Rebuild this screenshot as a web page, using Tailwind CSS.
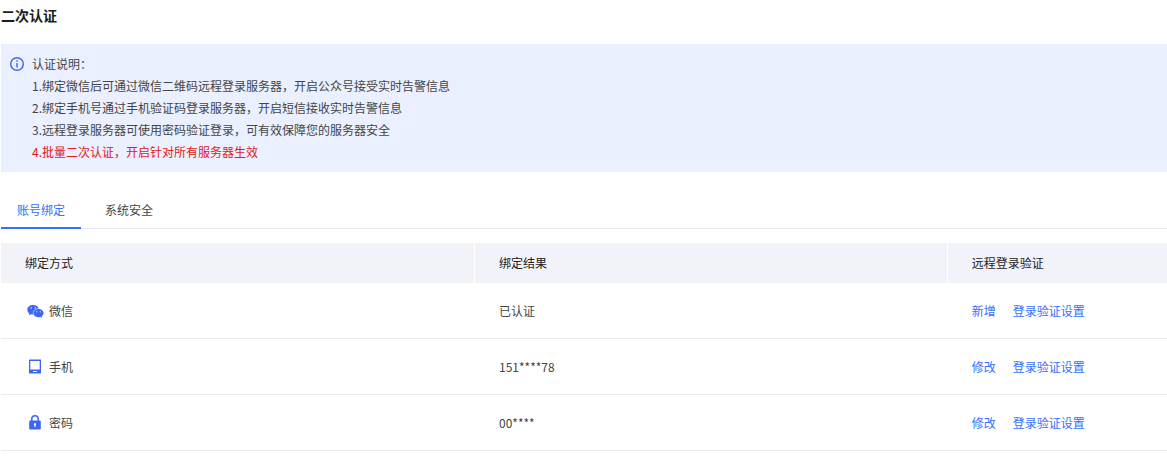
<!DOCTYPE html>
<html lang="zh-CN">
<head>
    <meta charset="UTF-8">
    <meta name="viewport" content="width=device-width, initial-scale=1.0">
    <title>二次认证</title>
    <script src="https://cdn.jsdelivr.net/npm/@tailwindcss/browser@4"></script>
</head>
<body class="bg-white pl-px font-['Noto_Sans_CJK_SC',sans-serif] text-xs text-[#444444]">
    <!-- Title -->
    <header class="pt-[3px] pb-[17px]">
        <h1 class="text-sm leading-6 font-bold text-[#1c1c1c]">二次认证</h1>
    </header>

    <main>
        <!-- Notice -->
        <section class="flex gap-[7px] bg-[#eaf0ff] px-2 py-[9px]">
            <svg class="mt-[3px] h-4 w-4 flex-none text-[#4569f5]" fill="none" stroke="currentColor" viewBox="0 0 16 16">
                <circle cx="8" cy="8" r="6.3" stroke-width="1.5"></circle>
                <path stroke-width="1.5" d="M8 7v4.5M8 4.3v1.5"></path>
            </svg>
            <div class="leading-[22px]">
                <p>认证说明：</p>
                <p>1.绑定微信后可通过微信二维码远程登录服务器，开启公众号接受实时告警信息</p>
                <p>2.绑定手机号通过手机验证码登录服务器，开启短信接收实时告警信息</p>
                <p>3.远程登录服务器可使用密码验证登录，可有效保障您的服务器安全</p>
                <p class="text-[#e02020]">4.批量二次认证，开启针对所有服务器生效</p>
            </div>
        </section>

        <!-- Tabs -->
        <nav class="mt-5 flex gap-2 border-b border-[#e6e9ee]" role="tablist">
            <button type="button" role="tab" aria-selected="true" class="-mb-px h-[37px] border-b-2 border-[#3370ff] px-4 text-[#3370ff]">账号绑定</button>
            <button type="button" role="tab" aria-selected="false" class="-mb-px h-[37px] border-b-2 border-transparent px-4">系统安全</button>
        </nav>

        <!-- Binding table -->
        <table class="mt-[14px] w-full table-fixed border-separate border-spacing-0 text-left">
            <thead>
                <tr class="h-10 bg-[#f2f3f8] text-[#222222]">
                    <th class="w-[40.65%] border-r border-white px-6 font-normal">绑定方式</th>
                    <th class="w-[40.55%] border-r border-white px-6 font-normal">绑定结果</th>
                    <th class="px-6 font-normal">远程登录验证</th>
                </tr>
            </thead>
            <tbody>
                <tr class="h-14">
                    <td class="border-r border-b border-r-white border-b-[#e8eaec] px-6">
                        <div class="flex items-center gap-1">
                            <svg class="h-5 w-5 text-[#3b66f5]" fill="currentColor" viewBox="0 0 20 20">
                                <path fill-rule="evenodd" d="M8.2 4C4.900 4 2.300 6.100 2.300 8.700c0 1.500.8 2.800 2.100 3.700L4 14.200l2.100-1c.6.2 1.200.3 1.900.3-.8-3.500 2-6.100 5.800-6.100C13.200 5.400 11 4 8.200 4zM6.200 6.200a.7.7 0 110 1.400.7.7 0 010-1.400zm4.200 0a.7.7 0 110 1.400.7.7 0 010-1.400z"></path>
                                <path fill-rule="evenodd" d="M13.500 8c-2.900 0-5.200 1.800-5.200 4.100s2.300 4.100 5.200 4.100c.6 0 1.200-.1 1.700-.3l1.800.9-.4-1.500c1.200-.8 2-1.900 2-3.200 0-2.300-2.200-4.100-5.100-4.100zm-1.700 2.200a.6.6 0 110 1.200.6.6 0 010-1.200zm3.500 0a.6.6 0 110 1.200.6.6 0 010-1.200z"></path>
                            </svg>
                            <span>微信</span>
                        </div>
                    </td>
                    <td class="border-r border-b border-r-white border-b-[#e8eaec] px-6">已认证</td>
                    <td class="border-b border-[#e8eaec] px-6">
                        <div class="flex gap-[17px] whitespace-nowrap text-[#3370ff]">
                            <a href="#">新增</a>
                            <a href="#">登录验证设置</a>
                        </div>
                    </td>
                </tr>
                <tr class="h-14">
                    <td class="border-r border-b border-r-white border-b-[#e8eaec] px-6">
                        <div class="flex items-center gap-1">
                            <svg class="h-5 w-5 text-[#3b66f5]" fill="currentColor" viewBox="0 0 20 20">
                                <path fill-rule="evenodd" d="M4.500 2.500h11a.5.5 0 01.5.5v13a.5.5 0 01-.5.5h-11A.5.5 0 014 16V3a.5.5 0 01.5-.5zM5.300 4v8.500h9.400V4zM8 14v1h4v-1z"></path>
                            </svg>
                            <span>手机</span>
                        </div>
                    </td>
                    <td class="border-r border-b border-r-white border-b-[#e8eaec] px-6">151****78</td>
                    <td class="border-b border-[#e8eaec] px-6">
                        <div class="flex gap-[17px] whitespace-nowrap text-[#3370ff]">
                            <a href="#">修改</a>
                            <a href="#">登录验证设置</a>
                        </div>
                    </td>
                </tr>
                <tr class="h-14">
                    <td class="border-r border-b border-r-white border-b-[#e8eaec] px-6">
                        <div class="flex items-center gap-1">
                            <svg class="h-5 w-5 text-[#3b66f5]" fill="currentColor" viewBox="0 0 20 20">
                                <path fill-rule="evenodd" d="M6 7.500V6a4 4 0 018 0v1.500h.8a1 1 0 011 1v7a1 1 0 01-1 1H5.200a1 1 0 01-1-1v-7a1 1 0 011-1zm1.500 0h5V6a2.500 2.500 0 00-5 0zM10 10a1.200 1.200 0 00-.6 2.200V14h1.200v-1.800A1.200 1.200 0 0010 10z"></path>
                            </svg>
                            <span>密码</span>
                        </div>
                    </td>
                    <td class="border-r border-b border-r-white border-b-[#e8eaec] px-6">00****</td>
                    <td class="border-b border-[#e8eaec] px-6">
                        <div class="flex gap-[17px] whitespace-nowrap text-[#3370ff]">
                            <a href="#">修改</a>
                            <a href="#">登录验证设置</a>
                        </div>
                    </td>
                </tr>
            </tbody>
        </table>
    </main>
</body>
</html>
